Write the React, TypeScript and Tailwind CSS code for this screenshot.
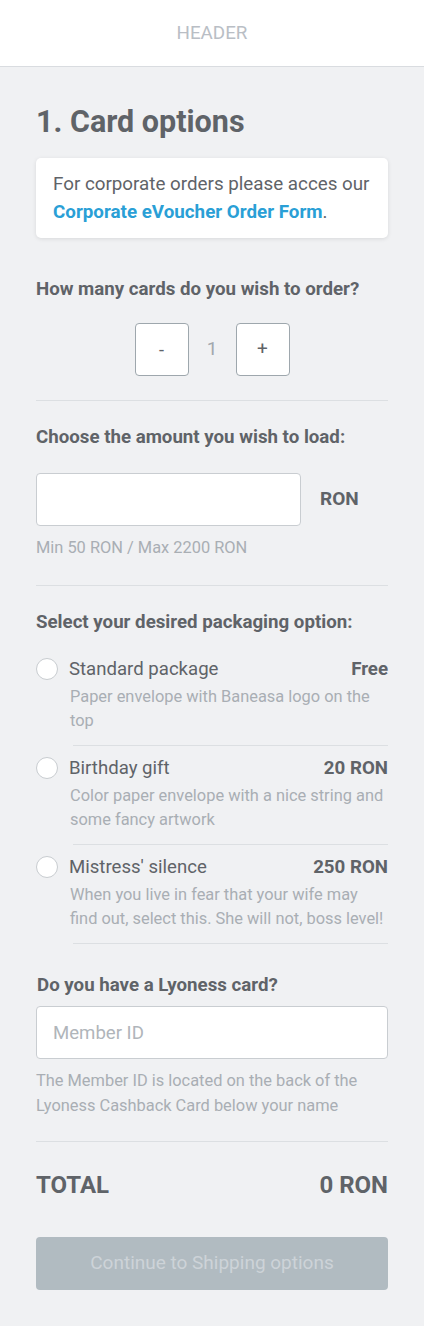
import React from 'react';

const options = [
  { title: 'Standard package', price: 'Free', desc: 'Paper envelope with Baneasa logo on the top' },
  { title: 'Birthday gift', price: '20 RON', desc: 'Color paper envelope with a nice string and some fancy artwork' },
  { title: "Mistress' silence", price: '250 RON', desc: 'When you live in fear that your wife may find out, select this. She will not, boss level!' },
];

function App() {
  return (
    <div className="min-h-screen bg-[#f0f1f3] text-[#5f6368]" style={{ fontFamily: 'Roboto, "Liberation Sans", sans-serif' }}>
      <header className="h-[67px] bg-white border-b border-[#d9dce0] flex items-center justify-center">
        <span className="text-[18.8px] text-[#b9bec5]">HEADER</span>
      </header>

      <main className="px-9 pt-[37px] pb-9">
        <h1 className="text-[30.5px] leading-9 font-bold">1. Card options</h1>

        <div className="mt-[18px] bg-white rounded-[5px] shadow-[0_1px_4px_rgba(0,0,0,0.1)] px-[17px] py-3 text-[18.8px] leading-7">
          For corporate orders please acces our{' '}
          <a className="text-[#2a9fd6] font-bold">Corporate eVoucher Order Form</a>.
        </div>

        {/* number of cards */}
        <h2 className="mt-[39px] text-[18.7px] leading-6 font-bold">How many cards do you wish to order?</h2>
        <div className="mt-[22px] flex items-center justify-center">
          <button className="w-[54px] h-[53px] bg-white border border-[#9ea7ad] rounded-[4px] text-[18px]">-</button>
          <span className="w-[47px] text-center text-[19px] text-[#a2a8ae]">1</span>
          <button className="w-[54px] h-[53px] bg-white border border-[#9ea7ad] rounded-[4px] text-[19px]">+</button>
        </div>

        <div className="mt-6 h-px bg-[#dcdfe2]" />

        {/* amount */}
        <h2 className="mt-6 text-[18.7px] leading-6 font-bold">Choose the amount you wish to load:</h2>
        <div className="mt-6 flex items-center">
          <input className="w-[265px] h-[53px] bg-white border border-[#c9cdd1] rounded-[4px] px-4 outline-none" />
          <span className="ml-[19px] text-[19px] font-bold">RON</span>
        </div>
        <p className="mt-3 text-[16.4px] leading-5 text-[#a9aeb4]">Min 50 RON / Max 2200 RON</p>

        <div className="mt-[27px] h-px bg-[#dcdfe2]" />

        {/* packaging */}
        <h2 className="mt-6 text-[18.7px] leading-6 font-bold">Select your desired packaging option:</h2>
        <div className="mt-[23px]">
          {options.map((o, i) => (
            <div key={o.title} className={i > 0 ? 'pt-[10px]' : ''}>
              <div className="flex items-center">
                <span className="w-[22px] h-[22px] rounded-full bg-white border border-[#c8ccd0] shrink-0" />
                <span className="ml-[11px] flex-1 text-[18.6px] leading-6">{o.title}</span>
                <span className="text-[18.7px] leading-6 font-bold">{o.price}</span>
              </div>
              <p className="mt-1 ml-[34px] text-[16.4px] leading-6 text-[#a9aeb4]">{o.desc}</p>
              <div className="mt-3 ml-[37px] h-px bg-[#dcdfe2]" />
            </div>
          ))}
        </div>

        {/* lyoness */}
        <h2 className="mt-[29px] ml-px text-[18.7px] leading-6 font-bold">Do you have a Lyoness card?</h2>
        <input
          placeholder="Member ID"
          className="mt-[9px] w-full h-[53px] bg-white border border-[#c9cdd1] rounded-[4px] px-4 text-[18.6px] placeholder:text-[#b0b5ba] outline-none"
        />
        <p className="mt-[9px] text-[16.4px] leading-[25px] text-[#a9aeb4]">
          The Member ID is located on the back of the Lyoness Cashback Card below your name
        </p>

        <div className="mt-[23px] h-px bg-[#dcdfe2]" />

        <div className="mt-[29px] flex items-center justify-between text-[24px] leading-7 font-bold">
          <span>TOTAL</span>
          <span>0 RON</span>
        </div>

        <button className="mt-[38px] w-full h-[53px] rounded-[4px] bg-[#b1bbc1] text-[19px] text-[#cdd3d8]">
          Continue to Shipping options
        </button>
      </main>
    </div>
  );
}

export default App;
